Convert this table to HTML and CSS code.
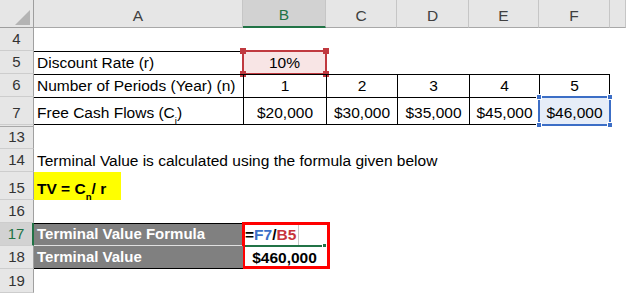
FILE: index.html
```html
<!DOCTYPE html>
<html>
<head>
<meta charset="utf-8">
<link rel="stylesheet" href="styles.css">
</head>
<body>
<div class="sheet">
  <div class="row hdr">
    <div class="corner"></div>
    <div class="ch">A</div><div class="ch sel">B</div><div class="ch">C</div><div class="ch">D</div><div class="ch">E</div><div class="ch">F</div><div class="ch"></div>
  </div>
  <div class="row">
    <div class="rh">4</div><div></div><div></div><div></div><div></div><div></div><div></div><div></div>
  </div>
  <div class="row">
    <div class="rh">5</div>
    <div class="txt bt">Discount Rate (r)</div>
    <div class="num bt ref-red">10%<i class="box red"><b class="hd tl"></b><b class="hd tr"></b><b class="hd bl2"></b><b class="hd br2"></b></i></div>
    <div></div><div></div><div></div><div></div><div></div>
  </div>
  <div class="row">
    <div class="rh">6</div>
    <div class="txt bt">Number of Periods (Year) (n)</div>
    <div class="num bt bl">1</div>
    <div class="num bt bl">2</div>
    <div class="num bt bl">3</div>
    <div class="num bt bl">4</div>
    <div class="num bt bl br">5</div>
    <div></div>
  </div>
  <div class="row h28">
    <div class="rh">7</div>
    <div class="txt bt bb">Free Cash Flows (C<sub>i</sub>)</div>
    <div class="num bt bl bb">$20,000</div>
    <div class="num bt bl bb">$30,000</div>
    <div class="num bt bl bb">$35,000</div>
    <div class="num bt bl bb">$45,000</div>
    <div class="num bt bl br bb ref-blue">$46,000<i class="box blue"><b class="hd tl"></b><b class="hd tr"></b><b class="hd bl2"></b><b class="hd br2"></b></i></div>
    <div></div>
  </div>
  <div class="row gap">
    <div class="rh"></div><div></div><div></div><div></div><div></div><div></div><div></div><div></div>
  </div>
  <div class="row h22">
    <div class="rh">13</div><div></div><div></div><div></div><div></div><div></div><div></div><div></div>
  </div>
  <div class="row">
    <div class="rh">14</div>
    <div class="txt">Terminal Value is calculated using the formula given below</div>
    <div></div><div></div><div></div><div></div><div></div><div></div>
  </div>
  <div class="row h28">
    <div class="rh">15</div>
    <div class="yel-cell"><span class="yel">TV = C<sub>n</sub> / r</span></div>
    <div></div><div></div><div></div><div></div><div></div><div></div>
  </div>
  <div class="row">
    <div class="rh">16</div><div></div><div></div><div></div><div></div><div></div><div></div><div></div>
  </div>
  <div class="row">
    <div class="rh sel">17</div>
    <div class="txt dark bt sep">Terminal Value Formula</div>
    <div class="edit"><span class="formula">=<span class="fb">F7</span>/<span class="fr">B5</span></span><span class="vline"></span><i class="active"><b class="ahd"></b></i><i class="redbox"></i></div>
    <div></div><div></div><div></div><div></div><div></div>
  </div>
  <div class="row">
    <div class="rh">18</div>
    <div class="txt dark bb">Terminal Value</div>
    <div class="num bold">$460,000</div>
    <div></div><div></div><div></div><div></div><div></div>
  </div>
  <div class="row h24">
    <div class="rh">19</div><div></div><div></div><div></div><div></div><div></div><div></div><div></div>
  </div>
</div>
</body>
</html>
```
FILE: styles.css
```css
* { box-sizing: border-box; margin: 0; padding: 0; }
html, body { background: #fff; }
body {
  margin: 0;
  font-family: "Liberation Sans", Arial, sans-serif;
  font-size: 15.5px;
  color: #000;
  overflow: hidden;
}
.sheet { width: 626px; height: 293px; overflow: hidden; }
.row {
  display: grid;
  grid-template-columns: 34px 209px 83px 71px 72px 70px 71px 16px;
  height: 23px;
}
.row > div {
  display: flex;
  align-items: flex-end;
  padding-bottom: 3px;
  line-height: 17px;
  white-space: nowrap;
  position: relative;
  min-width: 0;
}
.hdr { height: 28px; }
.h28 { height: 28px; }
.h22 { height: 22px; }
.h24 { height: 24px; }
.gap { height: 2px; }
.gap > div { padding: 0 !important; }

sub { font-size: 0.62em; vertical-align: -0.3em; line-height: 0; }

.corner {
  background: #e6e6e6;
  border-right: 1px solid #9e9e9e;
  border-bottom: 1px solid #9e9e9e;
}
.corner::after {
  content: "";
  position: absolute;
  left: 15px; top: 10px;
  width: 15px; height: 15px;
  background: #b4b4b4;
  clip-path: polygon(100% 0, 100% 100%, 0 100%);
}
.ch {
  background: #e6e6e6;
  border-right: 1px solid #c6c6c6;
  border-bottom: 1px solid #a8a8a8;
  justify-content: center;
  color: #404040;
}
.ch.sel {
  background: #d2d2d2;
  color: #217346;
  border-bottom: 2px solid #217346;
}
.rh {
  background: #e6e6e6;
  border-right: 1px solid #a0a0a0;
  border-bottom: 1px solid #cdcdcd;
  justify-content: center;
  color: #333;
  font-size: 15px;
}
.gap .rh { border-bottom: 1px solid #a8a8a8; background: #e6e6e6; }
.rh.sel {
  background: #d2d2d2;
  color: #217346;
  border-right: 2px solid #217346;
}

.txt { padding-left: 3px; }
.num { justify-content: center; }
.bold { font-weight: bold; }
.bt { border-top: 1px solid #000; }
.bb { border-bottom: 1px solid #000; }
.bl { border-left: 1px solid #000; }
.br { border-right: 1px solid #000; }

.ref-red { background: #f8e5e5; }
.ref-blue { background: #e6edf8; }
.box {
  position: absolute;
  border: 2px solid;
}
.box.red { border-color: #c0393f; left: -1px; right: -1px; top: -2px; bottom: -1px; }
.box.blue { border-color: #3c6ec6; left: -2px; right: -2px; top: -2px; bottom: -2px; }
.hd {
  position: absolute;
  width: 6px; height: 6px;
}
.red .hd { background: #c0393f; }
.blue .hd { background: #3c6ec6; border: 1px solid #fff; }
.hd.tl { left: -4px; top: -4px; }
.hd.tr { right: -4px; top: -4px; }
.hd.bl2 { left: -4px; bottom: -4px; }
.hd.br2 { right: -4px; bottom: -4px; }

.yel-cell { padding-bottom: 0 !important; align-items: stretch !important; }
.yel {
  width: 87px;
  background: #ffff00;
  font-weight: bold;
  padding-left: 3px;
  padding-bottom: 3px;
  display: flex;
  align-items: flex-end;
}

.dark {
  background: #808080;
  color: #fff;
  font-weight: bold;
  font-size: 15px;
}
.sep { border-bottom: 1px solid #e0e0e0; }

.edit { padding-left: 2px; font-weight: bold; }
.fb { color: #3b6fc8; }
.fr { color: #c7343c; }
.vline {
  align-self: flex-end;
  width: 1px;
  height: 20px;
  background: #c8c8c8;
  margin-left: 2px;
  margin-bottom: -2px;
}
.active {
  position: absolute;
  left: 2px; right: 1px; bottom: -1px;
  height: 2px;
  background: #217346;
}
.ahd {
  position: absolute;
  right: -2px; top: -2px;
  width: 5px; height: 5px;
  background: #217346;
  border: 1px solid #fff;
}
.redbox {
  position: absolute;
  left: -1px; top: -1px;
  width: 88px; height: 47px;
  border: 3px solid #ff0000;
}
```
